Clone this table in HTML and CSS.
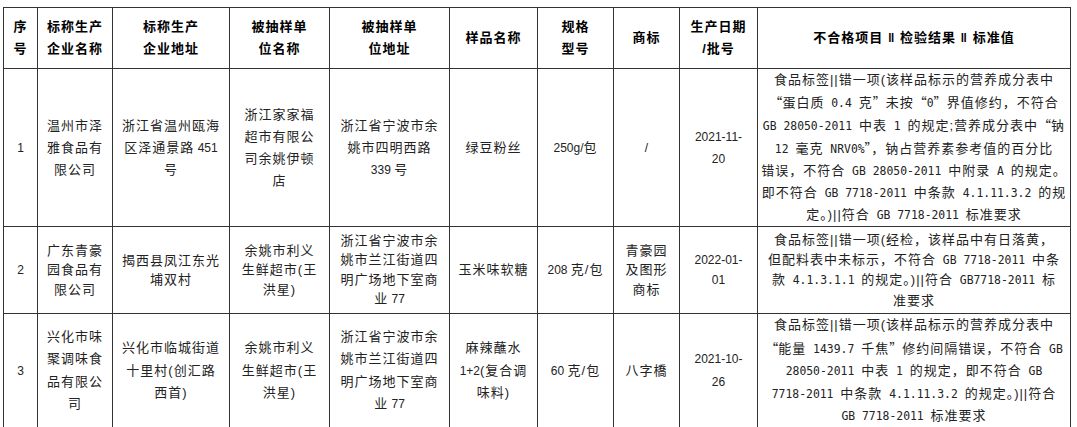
FILE: index.html
```html
<!DOCTYPE html>
<html lang="zh-CN">
<head>
<meta charset="utf-8">
<title>不合格产品信息</title>
<link rel="stylesheet" href="styles.css">
</head>
<body>
<table class="report">
  <colgroup>
    <col class="c-no">
    <col class="c-name">
    <col class="c-addr">
    <col class="c-unit">
    <col class="c-uaddr">
    <col class="c-prod">
    <col class="c-spec">
    <col class="c-mark">
    <col class="c-date">
    <col class="c-item">
  </colgroup>
  <thead>
    <tr class="head">
      <th>序<br>号</th>
      <th>标称生产<br>企业名称</th>
      <th>标称生产<br>企业地址</th>
      <th>被抽样单<br>位名称</th>
      <th>被抽样单<br>位地址</th>
      <th>样品名称</th>
      <th>规格<br>型号</th>
      <th>商标</th>
      <th>生产日期<br>/批号</th>
      <th>不合格项目 ‖ 检验结果 ‖ 标准值</th>
    </tr>
  </thead>
  <tbody>
    <tr class="r1">
      <td><span class="n">1</span></td>
      <td>温州市泽<br>雅食品有<br>限公司</td>
      <td>浙江省温州瓯海<br>区泽通景路<span class="n"> 451</span><br>号</td>
      <td>浙江家家福<br>超市有限公<br>司余姚伊顿<br>店</td>
      <td>浙江省宁波市余<br>姚市四明西路<br><span class="n">339 </span>号</td>
      <td>绿豆粉丝</td>
      <td><span class="n">250g/</span>包</td>
      <td><span class="n">/</span></td>
      <td><span class="n">2021-11-<br>20</span></td>
      <td class="item">食品标签||错一项(该样品标示的营养成分表中<br><span class="q">“</span>蛋白质<span class="m"> 0.4 </span>克<span class="q">”</span>未按<span class="q">“</span><span class="m">0</span><span class="q">”</span>界值修约，不符合<br><span class="m">GB 28050-2011 </span>中表<span class="m"> 1 </span>的规定;营养成分表中<span class="q">“</span>钠<br><span class="m">12 </span>毫克<span class="m"> NRV0%</span><span class="q">”</span>，钠占营养素参考值的百分比<br>错误，不符合<span class="m"> GB 28050-2011 </span>中附录<span class="m"> A </span>的规定。<br>即不符合<span class="m"> GB 7718-2011 </span>中条款<span class="m"> 4.1.11.3.2 </span>的规<br>定。)||符合<span class="m"> GB 7718-2011 </span>标准要求</td>
    </tr>
    <tr class="r2">
      <td><span class="n">2</span></td>
      <td>广东青豪<br>园食品有<br>限公司</td>
      <td>揭西县凤江东光<br>埔双村</td>
      <td>余姚市利义<br>生鲜超市(王<br>洪星)</td>
      <td>浙江省宁波市余<br>姚市兰江街道四<br>明广场地下室商<br>业<span class="n"> 77</span></td>
      <td>玉米味软糖</td>
      <td><span class="n">208 </span>克/包</td>
      <td>青豪园<br>及图形<br>商标</td>
      <td><span class="n">2022-01-<br>01</span></td>
      <td class="item">食品标签||错一项(经检，该样品中有日落黄，<br>但配料表中未标示，不符合<span class="m"> GB 7718-2011 </span>中条<br>款<span class="m"> 4.1.3.1.1 </span>的规定。)||符合<span class="m"> GB7718-2011 </span>标<br>准要求</td>
    </tr>
    <tr class="r3">
      <td><span class="n">3</span></td>
      <td>兴化市味<br>聚调味食<br>品有限公<br>司</td>
      <td>兴化市临城街道<br>十里村(创汇路<br>西首)</td>
      <td>余姚市利义<br>生鲜超市(王<br>洪星)</td>
      <td>浙江省宁波市余<br>姚市兰江街道四<br>明广场地下室商<br>业<span class="n"> 77</span></td>
      <td>麻辣蘸水<br><span class="n">1+2</span>(复合调<br>味料)</td>
      <td><span class="n">60 </span>克/包</td>
      <td>八字橋</td>
      <td><span class="n">2021-10-<br>26</span></td>
      <td class="item">食品标签||错一项(该样品标示的营养成分表中<br><span class="q">“</span>能量<span class="m"> 1439.7 </span>千焦<span class="q">”</span>修约间隔错误，不符合<span class="m"> GB</span><br><span class="m">28050-2011 </span>中表<span class="m"> 1 </span>的规定，即不符合<span class="m"> GB</span><br><span class="m">7718-2011 </span>中条款<span class="m"> 4.1.11.3.2 </span>的规定。)||符合<br><span class="m">GB 7718-2011 </span>标准要求</td>
    </tr>
  </tbody>
</table>
</body>
</html>
```

FILE: styles.css
```css
html, body {
  margin: 0;
  background: #ffffff;
}

body {
  font-family: "Liberation Sans", "Noto Sans CJK SC", sans-serif;
  color: #222222;
}

.report {
  border-collapse: collapse;
  table-layout: fixed;
  width: 1068px;
  margin: 7px 0 0 3px;
}

.c-no { width: 34px; }
.c-name { width: 75px; }
.c-addr { width: 117px; }
.c-unit { width: 100px; }
.c-uaddr { width: 120px; }
.c-prod { width: 88px; }
.c-spec { width: 76px; }
.c-mark { width: 66px; }
.c-date { width: 78px; }
.c-item { width: 313px; }

.report th,
.report td {
  border: 1px solid #333333;
  padding: 0 2px;
  text-align: center;
  vertical-align: middle;
  font-size: 13px;
  letter-spacing: 1px;
  white-space: nowrap;
  overflow: visible;
}

.report th {
  font-weight: bold;
  color: #000000;
  line-height: 22px;
}

.head { height: 61px; }

.r1 { height: 157px; }
.r1 td { line-height: 22px; }

.r2 { height: 87px; }
.r2 td { line-height: 19.5px; }

.r3 { height: 113px; }
.r3 td { line-height: 22.5px; }

.n {
  font-family: "Liberation Sans", sans-serif;
  font-size: 12px;
  letter-spacing: 0;
}

.m {
  font-family: "DejaVu Sans Mono", monospace;
  font-size: 11.4px;
  letter-spacing: 0;
}

.q {
  font-family: "Noto Sans CJK SC", sans-serif;
  font-feature-settings: "fwid" 1;
  letter-spacing: 0;
}

.item {
  letter-spacing: 0.3px;
}
```
